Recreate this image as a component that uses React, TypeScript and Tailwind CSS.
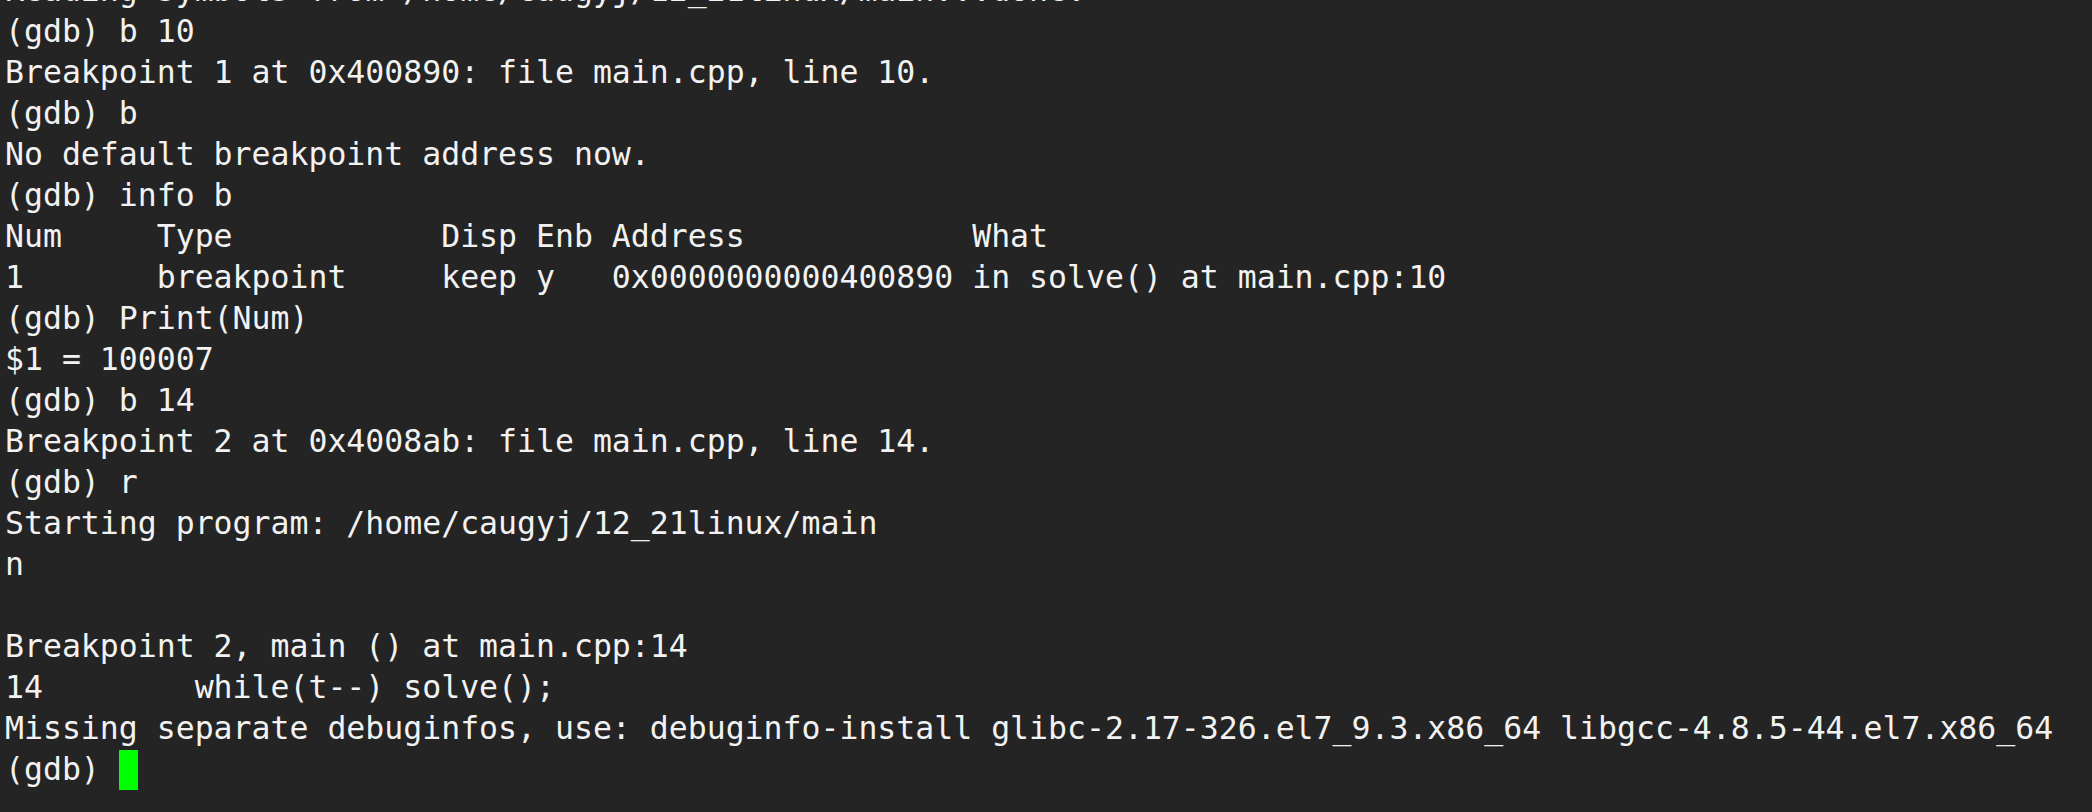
import React from "react";

const lines: string[] = [
  "Reading symbols from /home/caugyj/12_21linux/main...done.",
  "(gdb) b 10",
  "Breakpoint 1 at 0x400890: file main.cpp, line 10.",
  "(gdb) b",
  "No default breakpoint address now.",
  "(gdb) info b",
  "Num     Type           Disp Enb Address            What",
  "1       breakpoint     keep y   0x0000000000400890 in solve() at main.cpp:10",
  "(gdb) Print(Num)",
  "$1 = 100007",
  "(gdb) b 14",
  "Breakpoint 2 at 0x4008ab: file main.cpp, line 14.",
  "(gdb) r",
  "Starting program: /home/caugyj/12_21linux/main",
  "n",
  "",
  "Breakpoint 2, main () at main.cpp:14",
  "14        while(t--) solve();",
  "Missing separate debuginfos, use: debuginfo-install glibc-2.17-326.el7_9.3.x86_64 libgcc-4.8.5-44.el7.x86_64",
];

export default function App() {
  return (
    <div className="w-[2092px] h-[812px] overflow-hidden bg-[#242424] text-[#f2f2f2]">
      <div
        className="mt-[-30px] pl-[5px] text-[31.5px] leading-[41px] whitespace-pre"
        style={{ fontFamily: '"DejaVu Sans Mono", "Liberation Mono", monospace' }}
      >
        {lines.map((l, i) => (
          <div key={i} className="h-[41px]">
            {l}
          </div>
        ))}
        <div className="h-[41px] flex items-center">
          <span>(gdb) </span>
          <span className="inline-block w-[19px] h-[40px] bg-[#00ff00]" />
        </div>
      </div>
    </div>
  );
}
